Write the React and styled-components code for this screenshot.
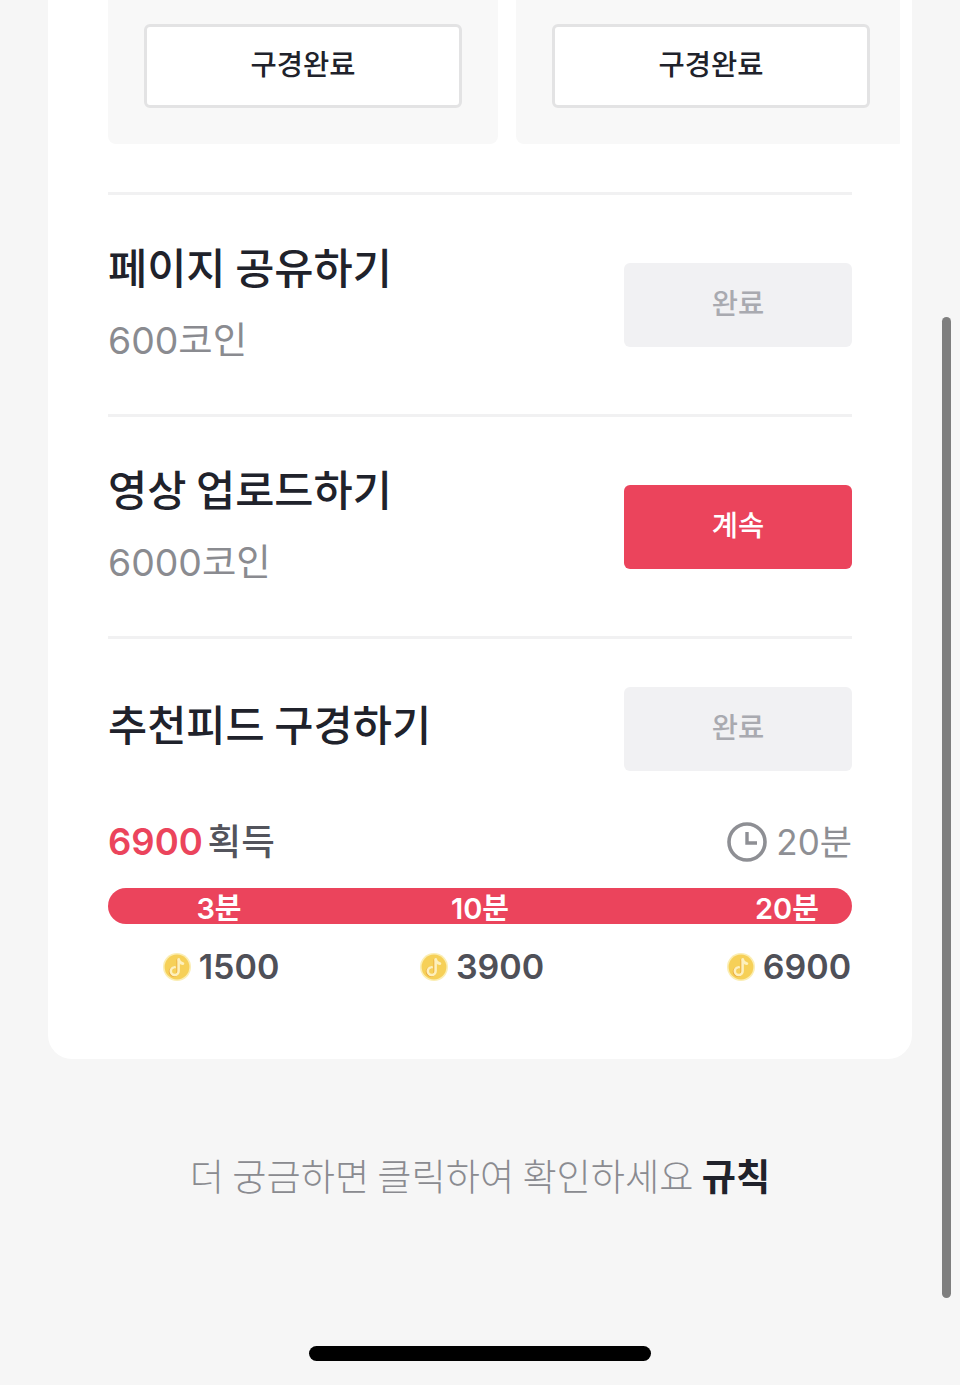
import styled, { createGlobalStyle } from "styled-components";

const KR = `"Noto Sans CJK KR", sans-serif`;
const NUM = `Inter, "Noto Sans CJK KR", sans-serif`;

const GlobalStyle = createGlobalStyle`
  html, body {
    margin: 0;
    padding: 0;
    background: #f6f6f6;
  }
`;

const tasks = [
  { title: "페이지 공유하기", coins: "600코인", label: "완료", done: true },
  { title: "영상 업로드하기", coins: "6000코인", label: "계속", done: false },
];

const ticks = [
  { time: "3분", coins: "1500", gap: 0 },
  { time: "10분", coins: "3900", gap: 141 },
  { time: "20분", coins: "6900", gap: 187 },
];

const Coin = () => (
  <CoinSvg viewBox="0 0 28 28">
    <circle cx="14" cy="14" r="14" fill="#fbeeb4" />
    <circle cx="14" cy="14" r="12.4" fill="#f6d058" />
    <path
      d="M15.6 6.5v11.6a3.9 3.9 0 1 1-3.9-3.9"
      fill="none"
      stroke="#e9a93c"
      strokeWidth="2.6"
      strokeLinecap="round"
      transform="translate(-.8 .5)"
    />
    <path
      d="M15.6 6.5v11.6a3.9 3.9 0 1 1-3.9-3.9"
      fill="none"
      stroke="#fdf0bd"
      strokeWidth="2.6"
      strokeLinecap="round"
    />
    <path d="M15.8 6.5c.3 2.3 1.9 3.8 4.2 4.1" fill="none" stroke="#fdf0bd" strokeWidth="2.6" strokeLinecap="round" />
  </CoinSvg>
);

const Clock = () => (
  <ClockSvg viewBox="0 0 40 40">
    <circle cx="20" cy="20" r="18" fill="none" stroke="#8e8f94" strokeWidth="3.6" />
    <path d="M20 10v11h10" fill="none" stroke="#8e8f94" strokeWidth="3.4" />
  </ClockSvg>
);

export default function App() {
  return (
    <Page>
      <GlobalStyle />
      <Card>
        <Tiles>
          <Tile>
            <TileButton>구경완료</TileButton>
          </Tile>
          <Tile>
            <TileButton>구경완료</TileButton>
          </Tile>
        </Tiles>

        {tasks.map((task) => (
          <TaskRow key={task.title}>
            <TaskText>
              <TaskTitle>{task.title}</TaskTitle>
              <TaskCoins>{task.coins}</TaskCoins>
            </TaskText>
            <ActionButton $done={task.done}>{task.label}</ActionButton>
          </TaskRow>
        ))}

        <FeedRow>
          <FeedTitle>추천피드 구경하기</FeedTitle>
          <ActionButton $done>완료</ActionButton>
        </FeedRow>

        <SummaryRow>
          <Earned>
            <strong>6900</strong> 획득
          </Earned>
          <Elapsed>
            <Clock />
            20분
          </Elapsed>
        </SummaryRow>

        <ProgressBar>
          {ticks.map((t) => (
            <TickCell key={t.time} $gap={t.gap}>
              {t.time}
            </TickCell>
          ))}
        </ProgressBar>
        <Rewards>
          {ticks.map((t) => (
            <RewardCell key={t.time} $gap={t.gap}>
              <Coin />
              {t.coins}
            </RewardCell>
          ))}
        </Rewards>
      </Card>

      <Footer>
        더 궁금하면 클릭하여 확인하세요 <b>규칙</b>
      </Footer>

      <Scrollbar />
      <HomeIndicator />
    </Page>
  );
}

const Page = styled.div`
  position: relative;
  width: 960px;
  height: 1385px;
  overflow: hidden;
  background: #f6f6f6;
  padding: 0 48px;
  box-sizing: border-box;
`;

const Card = styled.div`
  background: #fff;
  height: 1059px;
  box-sizing: border-box;
  padding: 0 60px;
  border-radius: 0 0 24px 24px;
`;

const Tiles = styled.div`
  display: flex;
  gap: 18px;
  width: 792px;
  height: 192px;
  overflow: hidden;
`;

const Tile = styled.div`
  flex: 0 0 390px;
  height: 144px;
  box-sizing: border-box;
  padding: 24px 36px 0;
  background: #f8f8f8;
  border-radius: 0 0 8px 8px;
`;

const TileButton = styled.div`
  height: 84px;
  box-sizing: border-box;
  border: 3px solid #e3e3e4;
  border-radius: 6px;
  background: #fff;
  display: flex;
  align-items: center;
  justify-content: center;
  padding-bottom: 8px;
  font: 500 28.5px ${KR};
  color: #20222b;
`;

const TaskRow = styled.div`
  display: flex;
  justify-content: space-between;
  align-items: center;
  height: 222px;
  box-sizing: border-box;
  border-top: 3px solid #f1f1f2;
`;

const FeedRow = styled(TaskRow)`
  height: 135px;
  padding-top: 47px;
`;

const TaskText = styled.div`
  padding-bottom: 7px;
`;

const TaskTitle = styled.div`
  font: 500 42.6px/56px ${KR};
  color: #20222b;
`;

const FeedTitle = styled(TaskTitle)`
  padding-bottom: 12px;
`;

const TaskCoins = styled.div`
  margin-top: 23px;
  font: 400 37.4px/48px ${NUM};
  color: #8a8b90;
`;

const ActionButton = styled.div`
  width: 228px;
  height: 84px;
  border-radius: 6px;
  display: flex;
  align-items: center;
  justify-content: center;
  padding-bottom: 6px;
  box-sizing: border-box;
  font: 500 28.5px ${KR};
  background: ${(p) => (p.$done ? "#f1f1f3" : "#eb445c")};
  color: ${(p) => (p.$done ? "#a9aab0" : "#fff")};
`;

const SummaryRow = styled.div`
  display: flex;
  justify-content: space-between;
  align-items: center;
  height: 72px;
  margin-top: 35px;
`;

const Earned = styled.div`
  font: 500 36.5px/48px ${NUM};
  word-spacing: -5px;
  color: #53545c;

  strong {
    font-weight: 600;
    color: #eb445c;
  }
`;

const Elapsed = styled.div`
  display: flex;
  align-items: center;
  gap: 9px;
  font: 400 35px/48px ${NUM};
  color: #8e8f94;
`;

const ClockSvg = styled.svg`
  width: 40px;
  height: 40px;
`;

const ProgressBar = styled.div`
  display: flex;
  height: 36px;
  margin-top: 10px;
  padding-left: 51px;
  border-radius: 18px;
  background: #eb445c;
`;

const TickCell = styled.div`
  width: 120px;
  margin-left: ${(p) => p.$gap}px;
  text-align: center;
  font: 600 29px/41px ${NUM};
  color: #fff;
`;

const Rewards = styled.div`
  display: flex;
  margin-top: 21px;
  padding-left: 53px;
`;

const RewardCell = styled.div`
  width: 120px;
  margin-left: ${(p) => p.$gap}px;
  display: flex;
  align-items: center;
  justify-content: center;
  gap: 8px;
  white-space: nowrap;
  font: 600 34px/44px ${NUM};
  color: #4f5058;
`;

const CoinSvg = styled.svg`
  width: 28px;
  height: 28px;
  flex: none;
`;

const Footer = styled.div`
  margin-top: 91px;
  text-align: center;
  font: 300 37.2px/50px ${KR};
  color: #8a8b90;

  b {
    font-weight: 700;
    color: #20222b;
  }
`;

const Scrollbar = styled.div`
  position: absolute;
  left: 942px;
  top: 317px;
  width: 9px;
  height: 981px;
  border-radius: 5px;
  background: #7f7f7f;
`;

const HomeIndicator = styled.div`
  position: absolute;
  left: 309px;
  top: 1346px;
  width: 342px;
  height: 15px;
  border-radius: 8px;
  background: #000;
`;
